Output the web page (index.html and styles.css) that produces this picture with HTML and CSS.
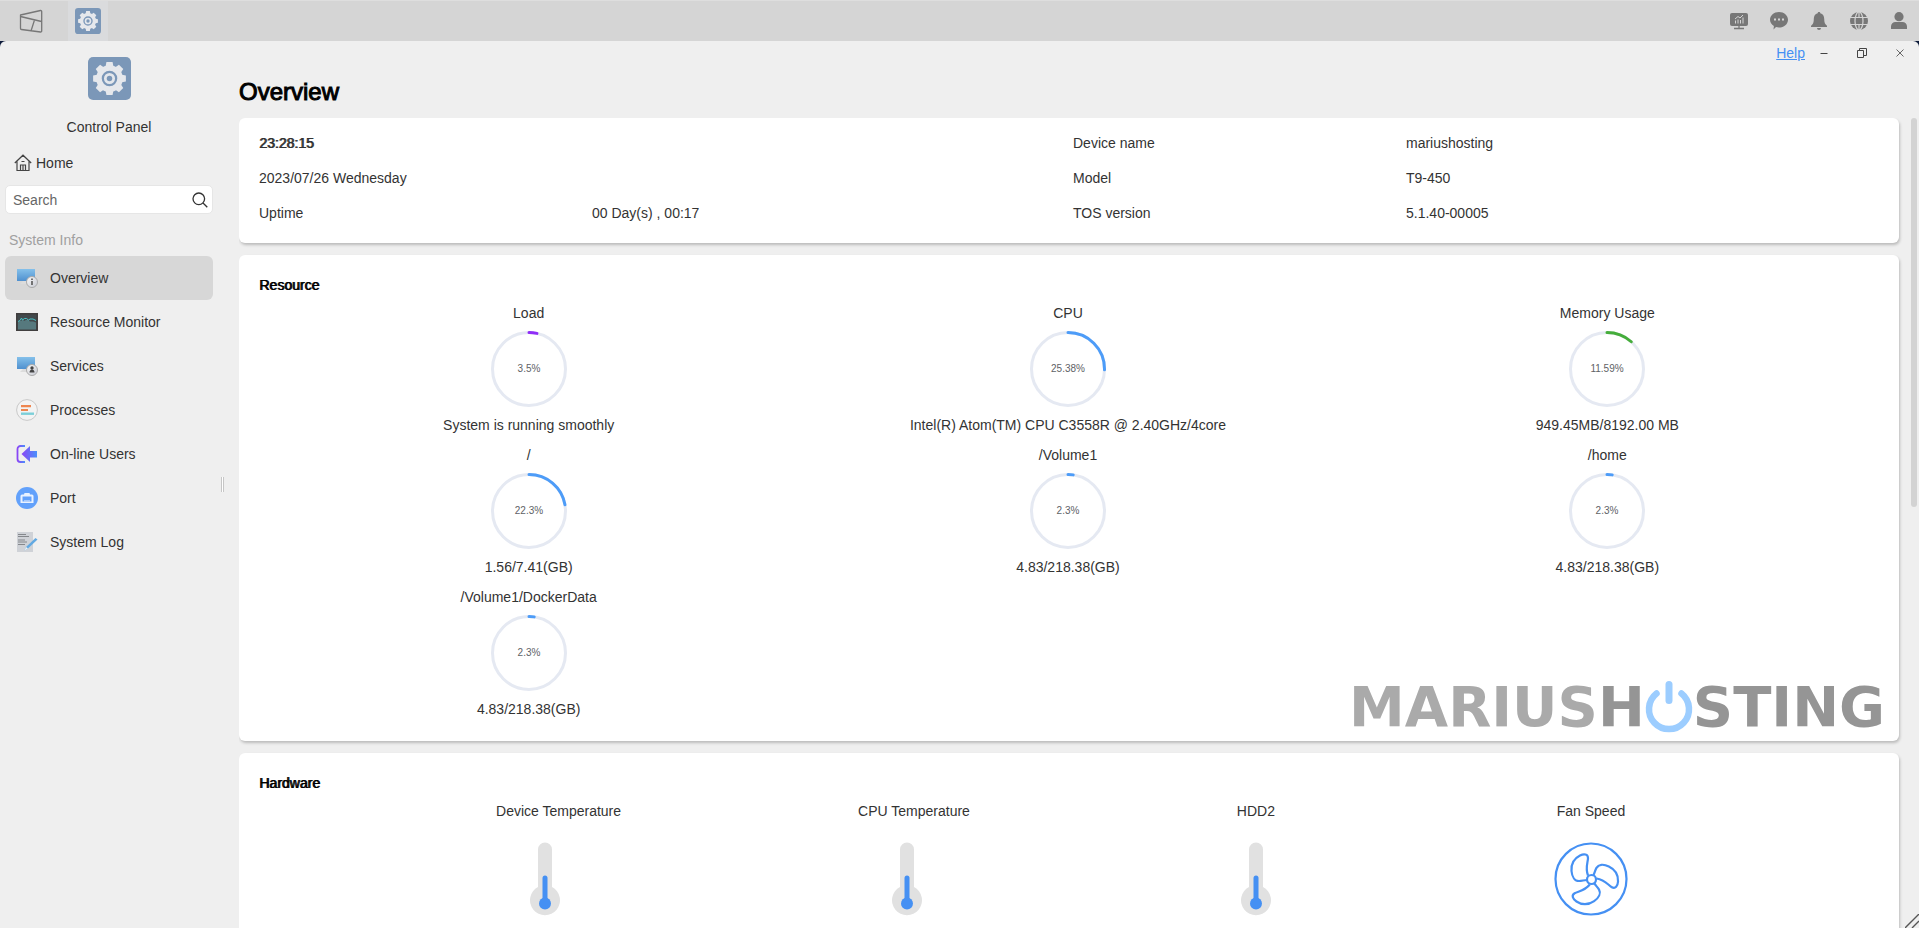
FILE: index.html
```
<!DOCTYPE html>
<html lang="en">
<head>
<meta charset="utf-8">
<title>Control Panel</title>
<link rel="stylesheet" href="styles.css">
</head>
<body>
<svg width="0" height="0" class="defs" aria-hidden="true">
  <defs>
    <linearGradient id="silver" x1="0" y1="0" x2="1" y2="1"><stop offset="0" stop-color="#fafafa"/><stop offset="1" stop-color="#c6c9d2"/></linearGradient>
    <linearGradient id="screen" x1="0" y1="0" x2="0" y2="1"><stop offset="0" stop-color="#84c0ea"/><stop offset="1" stop-color="#4f90cf"/></linearGradient>
    <linearGradient id="violet" x1="0" y1="0" x2="1" y2="0"><stop offset="0" stop-color="#8a45f5"/><stop offset="1" stop-color="#4a90fb"/></linearGradient>
    <symbol id="gear" viewBox="0 0 42 42">
      <rect width="42" height="42" rx="5" fill="#7b97b8"/>
      <g fill="#e6e8ec">
        <circle cx="21" cy="21" r="13"/>
        <path d="M17 10 18 5h6l1 5zM17 32l1 5h6l1-5z"/>
        <path d="M17 10 18 5h6l1 5zM17 32l1 5h6l1-5z" transform="rotate(45 21 21)"/>
        <path d="M17 10 18 5h6l1 5zM17 32l1 5h6l1-5z" transform="rotate(90 21 21)"/>
        <path d="M17 10 18 5h6l1 5zM17 32l1 5h6l1-5z" transform="rotate(135 21 21)"/>
      </g>
      <circle cx="21" cy="21" r="6.500" fill="#e4e7ec" stroke="#7b97b8" stroke-width="2.200"/>
      <circle cx="21" cy="21" r="2.700" fill="#7b97b8"/>
    </symbol>
    <symbol id="thermo" viewBox="0 0 98 76">
      <path d="M42 8.500a7 7 0 0 1 14 0V46a15 15 0 1 1-14 0z" fill="#e1e1e1"/>
      <path d="M49 37V62" stroke="#4590f3" stroke-width="5" stroke-linecap="round"/>
      <circle cx="49" cy="62.500" r="6" fill="#4590f3"/>
    </symbol>
  </defs>
</svg>
<div class="desktop">
  <header class="topbar">
    <button class="task" aria-label="Desktop"><svg width="24" height="24" viewBox="0 0 24 24" fill="none" stroke="#777" stroke-width="1.300" stroke-linejoin="round"><path d="M1.500 6 21.500 1.500a1 1 0 0 1 1.200 1V22a1 1 0 0 1-1.200 1L2.500 20.500a1 1 0 0 1-1-1zM1.500 7.500l21 5M15.500 11l-3.500 11"/></svg></button>
    <button class="task active" aria-label="Control Panel"><svg width="26" height="26"><use href="#gear"/></svg></button>
    <nav class="tray">
      <button aria-label="Monitor"><svg width="18" height="18" viewBox="0 0 18 18"><rect y="1" width="18" height="13" rx="2" fill="#777"/><path d="M9 14v2M4 16.500h10" stroke="#777" stroke-width="1.300"/><path d="M5.500 11.500V8.500M8 11.500V7.500M10.500 11.500V8M13 11.500V5.500M5 7l3-2.500 2 1.500 3-3" stroke="#d5d5d5" fill="none"/></svg></button>
      <button aria-label="Messages"><svg width="18" height="18" viewBox="0 0 18 18"><path d="M9 0c5 0 9 3.400 9 7.800s-4 7.800-9 7.800c-1.200 0-2.200-.2-3-.5L3.500 17.500l.4-3.500C1.500 12.600 0 10.400 0 7.800 0 3.400 4 0 9 0z" fill="#777"/><path d="M4 7.500h2M8 7.500h2M12 7.500h2" stroke="#d5d5d5" stroke-width="2"/></svg></button>
      <button aria-label="Notifications"><svg width="18" height="18" viewBox="0 0 18 18"><path d="M9 0c.8 0 1.300.5 1.300 1.300 2.700.7 3.900 2.900 3.900 5.500 0 4 .8 5.500 2.800 7v1.200H1v-1.200c2-1.500 2.800-3 2.800-7 0-2.600 1.200-4.800 3.900-5.500C7.700.5 8.200 0 9 0zM7 16h4a2 2 0 0 1-4 0z" fill="#777"/></svg></button>
      <button aria-label="Language"><svg width="18" height="18" viewBox="0 0 18 18"><circle cx="9" cy="9" r="9" fill="#777"/><g fill="none" stroke="#d5d5d5" stroke-width="1.200"><ellipse cx="9" cy="9" rx="4" ry="9"/><path d="M0 5.500h18M0 12.500h18M9 0v5.500M9 12.500V18"/></g></svg></button>
      <button aria-label="User"><svg width="18" height="18" viewBox="0 0 18 18" fill="#777"><circle cx="9" cy="4.700" r="4.600"/><path d="M1 17v-2.500a4.500 4.500 0 0 1 4.500-4.500h7a4.500 4.500 0 0 1 4.500 4.500V17z"/></svg></button>
    </nav>
  </header>
  <div class="window">
    <aside class="sidebar">
      <div class="app"><svg width="43" height="43"><use href="#gear"/></svg><span>Control Panel</span></div>
      <a class="home" href="#"><svg width="18" height="18" viewBox="0 0 18 18" fill="none" stroke="#444" stroke-width="1.200"><path d="M.8 9 9 1.200 17.200 9M3 7.500V16.500h12V7.500M6.500 16.500V11h5v5.500M9 11v5M7.500 7.500h3"/></svg>Home</a>
      <label class="search"><input type="text" placeholder="Search" aria-label="Search"><svg width="16" height="16" viewBox="0 0 16 16" fill="none" stroke="#333" stroke-width="1.300"><circle cx="6.800" cy="6.800" r="5.800"/><path d="m11 11 4.300 4.300"/></svg></label>
      <h2 class="group">System Info</h2>
      <nav class="menu">
        <a class="item current" href="#"><svg width="22" height="22" viewBox="0 0 22 22"><path d="M7 14h6l2 3H4z" fill="#dcdcdc"/><rect x="1" y="2" width="18" height="12" fill="url(#screen)"/><circle cx="16" cy="15" r="5.500" fill="url(#silver)" stroke="#aaa"/><path d="M16 14v4M16 11.500v1.500" stroke="#666" stroke-width="1.800"/></svg>Overview</a>
        <a class="item" href="#"><svg width="22" height="22" viewBox="0 0 22 22"><rect x=".8" y="2.800" width="20.400" height="16.400" fill="#41494c" stroke="#413f3f" stroke-width="1.600"/><path d="M2 10.500l4-1 1-1 1 1.500 2-1 2 0 2 1.500 3 0 3 1v7H2z" fill="#56797e"/><path d="M2 10.500l2-1 1.500-2.500 1 2 2-1.500 2 0 2 1.500 1.500-1 3 0 3 1.500" fill="none" stroke="#49c2c6"/></svg>Resource Monitor</a>
        <a class="item" href="#"><svg width="22" height="22" viewBox="0 0 22 22"><path d="M7 14h6l2 3H4z" fill="#dcdcdc"/><rect x="1" y="2" width="18" height="12" fill="url(#screen)"/><circle cx="16" cy="15" r="5.500" fill="url(#silver)" stroke="#aaa"/><circle cx="16" cy="13" r="1.700" fill="#444"/><path d="M13.500 17.500c0-4 5-4 5 0z" fill="#444"/></svg>Services</a>
        <a class="item" href="#"><svg width="22" height="22" viewBox="0 0 22 22"><circle cx="11" cy="11" r="10.400" fill="#f3f3f3" stroke="#c9c9c9"/><path d="M5 7.200h10M5 11h7" stroke="#ee8650" stroke-width="2.200"/><path d="M5 14.700h13" stroke="#7ccfd8" stroke-width="2.400"/></svg>Processes</a>
        <a class="item" href="#"><svg width="22" height="22" viewBox="0 0 22 22"><path d="M9 3H4.500a3 3 0 0 0-3 3v10a3 3 0 0 0 3 3H9" fill="none" stroke="url(#violet)" stroke-width="1.800"/><path d="M5.500 11 14 3v5h7v6.500h-7V19z" fill="url(#violet)"/></svg>On-line Users</a>
        <a class="item" href="#"><svg width="22" height="22" viewBox="0 0 22 22"><circle cx="11" cy="11" r="11" fill="#62a1fb"/><path d="M6 7.500h2L8.500 6h5l.5 1.500h2A1.500 1.500 0 0 1 17.500 9v7h-13V9A1.500 1.500 0 0 1 6 7.500z" fill="#e9f2ff"/><path d="M6.500 9.500h9v5h-9z" fill="#62a1fb"/><path d="M9 13v1.500M11 13v1.500M13 13v1.500" stroke="#e9f2ff"/></svg>Port</a>
        <a class="item" href="#"><svg width="22" height="22" viewBox="0 0 22 22"><path d="M1 1h16v20H1z" fill="#cfd2d7"/><path d="M2 3.500h8M2 5.500h11M2 9h7M2 11h9M2 13.500h7" stroke="#85888c"/><path d="M8.500 19.500 10 16 19.500 7l2 1.500L12 17.500z" fill="#62a9e2"/><path d="M8.500 19.500 10 16l2 1.500z" fill="#eef3f7"/></svg>System Log</a>
      </nav>
    </aside>
    <div class="splitter"></div>
    <main class="content">
      <div class="titlebar">
        <a href="#">Help</a>
        <button aria-label="Minimize"><svg width="10" height="10" viewBox="0 0 10 10"><path d="M1.500 5.500h7" stroke="#444"/></svg></button>
        <button aria-label="Restore"><svg width="10" height="10" viewBox="0 0 10 10" fill="none" stroke="#444"><path d="M.5 2.500h6v7h-6zM2.500 2.500v-2h7v7h-3"/></svg></button>
        <button aria-label="Close"><svg width="10" height="10" viewBox="0 0 10 10" fill="none" stroke="#666"><path d="m1.500 1.500 7 7M8.500 1.500l-7 7"/></svg></button>
      </div>
      <h1>Overview</h1>
      <div class="scroller">
        <div class="cards">
          <section class="card info">
            <strong>23:28:15</strong><span></span><span>Device name</span><span>mariushosting</span>
            <span>2023/07/26 Wednesday</span><span></span><span>Model</span><span>T9-450</span>
            <span>Uptime</span><span>00 Day(s) , 00:17</span><span>TOS version</span><span>5.1.40-00005</span>
          </section>
          <section class="card">
            <h3>Resource</h3>
            <div class="gauges">
              <figure><span>Load</span><svg class="ring" viewBox="0 0 76 76"><circle cx="38" cy="38" r="36.500"/><circle class="arc purple" cx="38" cy="38" r="36.500" pathLength="100" stroke-dasharray="3.500 100"/><text x="38" y="41">3.5%</text></svg><figcaption>System is running smoothly</figcaption></figure>
              <figure><span>CPU</span><svg class="ring" viewBox="0 0 76 76"><circle cx="38" cy="38" r="36.500"/><circle class="arc" cx="38" cy="38" r="36.500" pathLength="100" stroke-dasharray="25.380 100"/><text x="38" y="41">25.38%</text></svg><figcaption>Intel(R) Atom(TM) CPU C3558R @ 2.40GHz/4core</figcaption></figure>
              <figure><span>Memory Usage</span><svg class="ring" viewBox="0 0 76 76"><circle cx="38" cy="38" r="36.500"/><circle class="arc green" cx="38" cy="38" r="36.500" pathLength="100" stroke-dasharray="11.590 100"/><text x="38" y="41">11.59%</text></svg><figcaption>949.45MB/8192.00 MB</figcaption></figure>
              <figure><span>/</span><svg class="ring" viewBox="0 0 76 76"><circle cx="38" cy="38" r="36.500"/><circle class="arc" cx="38" cy="38" r="36.500" pathLength="100" stroke-dasharray="22.300 100"/><text x="38" y="41">22.3%</text></svg><figcaption>1.56/7.41(GB)</figcaption></figure>
              <figure><span>/Volume1</span><svg class="ring" viewBox="0 0 76 76"><circle cx="38" cy="38" r="36.500"/><circle class="arc" cx="38" cy="38" r="36.500" pathLength="100" stroke-dasharray="2.300 100"/><text x="38" y="41">2.3%</text></svg><figcaption>4.83/218.38(GB)</figcaption></figure>
              <figure><span>/home</span><svg class="ring" viewBox="0 0 76 76"><circle cx="38" cy="38" r="36.500"/><circle class="arc" cx="38" cy="38" r="36.500" pathLength="100" stroke-dasharray="2.300 100"/><text x="38" y="41">2.3%</text></svg><figcaption>4.83/218.38(GB)</figcaption></figure>
              <figure><span>/Volume1/DockerData</span><svg class="ring" viewBox="0 0 76 76"><circle cx="38" cy="38" r="36.500"/><circle class="arc" cx="38" cy="38" r="36.500" pathLength="100" stroke-dasharray="2.300 100"/><text x="38" y="41">2.3%</text></svg><figcaption>4.83/218.38(GB)</figcaption></figure>
            </div>
            <div class="brand"><span class="light">MARIUS</span><span>H</span><svg width="48" height="52" viewBox="0 0 48 52" fill="none" stroke="#9ccdff" stroke-linecap="round"><path d="M11.500 12.500A20 20 0 1 0 36.500 12.500" stroke-width="6.500"/><path d="M24 3.500v16" stroke-width="7"/></svg><span>STING</span></div>
          </section>
          <section class="card">
            <h3>Hardware</h3>
            <div class="sensors">
              <div><span>Device Temperature</span><svg width="98" height="76"><use href="#thermo"/></svg></div>
              <div><span>CPU Temperature</span><svg width="98" height="76"><use href="#thermo"/></svg></div>
              <div><span>HDD2</span><svg width="98" height="76"><use href="#thermo"/></svg></div>
              <div><span>Fan Speed</span><svg width="98" height="76" viewBox="0 0 98 76" fill="none" stroke="#4590f3" stroke-width="2.200"><circle cx="49" cy="38" r="35.500"/><circle cx="49.500" cy="38.500" r="4.500"/><path d="M46 34.500C43 27 46 21 46 17c0-4-4-4.500-8-2.500-6 3-9 9-8.500 15.500C30 36 33 40 37 40c3 0 5-1 8-1"/><path d="M46 34.500C43 27 46 21 46 17c0-4-4-4.500-8-2.500-6 3-9 9-8.500 15.500C30 36 33 40 37 40c3 0 5-1 8-1" transform="rotate(120 49.500 38.500)"/><path d="M46 34.500C43 27 46 21 46 17c0-4-4-4.500-8-2.500-6 3-9 9-8.500 15.500C30 36 33 40 37 40c3 0 5-1 8-1" transform="rotate(240 49.500 38.500)"/></svg></div>
            </div>
          </section>
        </div>
        <div class="scrollbar"><div class="thumb"></div></div>
      </div>
    </main>
    <svg class="grip" width="14" height="14" viewBox="0 0 14 14" stroke="#555" stroke-width="1.400"><path d="M0 14 14 0M7 14l7-7"/></svg>
  </div>
</div>
</body>
</html>
```
FILE: styles.css
```
* { box-sizing: border-box; }
body { margin: 0; font: 14px/20px "Liberation Sans", Arial, sans-serif; color: #333; background: #0c1a3a; }
button { border: 0; padding: 0; background: none; display: grid; place-items: center; }
h1, h2, h3, figure { margin: 0; }
.defs { position: absolute; }
.desktop { height: 100vh; display: flex; flex-direction: column; overflow: hidden; }
.topbar { height: 41px; flex: none; display: flex; align-items: stretch; background: #d5d5d5; border-top: 1px solid #dedede; padding: 0 11px; }
.task { width: 40px; margin-right: 17px; }
.task.active { background: #dadbdd; margin: 0; }
.tray { margin-left: auto; display: flex; align-items: center; gap: 22px; }
.window { position: relative; flex: 1; min-height: 0; display: flex; background: #efefef; border-radius: 6px 6px 0 0; }

.sidebar { width: 218px; flex: none; padding: 16px 5px 0; }
.app { display: flex; flex-direction: column; align-items: center; gap: 17px; }
.home { display: flex; align-items: center; gap: 4px; margin: 16px 0 12px 9px; color: #333; text-decoration: none; }
.search { display: flex; align-items: center; height: 29px; background: #fff; border: 1px solid #e6e6e6; border-radius: 5px; padding: 0 4px 0 7px; }
.search input { flex: 1; min-width: 0; border: 0; padding: 0; background: none; font: inherit; outline: 0; }
.search input::placeholder { color: #666; opacity: 1; }
.group { margin: 16px 4px 6px; font-size: 14px; font-weight: 400; color: #a0a0a0; }
.item { display: flex; align-items: center; gap: 12px; height: 44px; padding-left: 11px; border-radius: 6px; color: #333; text-decoration: none; }
.item.current { background: #d7d7d7; }
.splitter { align-self: center; width: 3px; height: 15px; margin: 0 15px 0 3px; border: solid #c6c6c6; border-width: 0 1px; background: #fff; }

.content { flex: 1; min-width: 0; display: flex; flex-direction: column; }
.titlebar { display: flex; align-items: center; justify-content: flex-end; height: 24px; padding-right: 14px; }
.titlebar a { color: #4590f3; margin-right: 14px; }
.titlebar button { width: 10px; margin-right: 28px; }
.titlebar button:last-child { margin-right: 0; }
h1 { font-size: 24px; line-height: 30px; font-weight: 400; color: #000; -webkit-text-stroke: 1px #000; padding: 12px 0 11px; }
.scroller { flex: 1; min-height: 0; display: flex; gap: 12px; overflow: hidden; }
.cards { flex: 1; min-width: 0; display: flex; flex-direction: column; gap: 12px; }
.card { position: relative; flex: none; background: #fff; border-radius: 6px; padding: 20px 22px 22px 20px; box-shadow: 1px 2px 3px rgba(0, 0, 0, .22); }
.info { display: grid; grid-template-columns: 9fr 13fr 9fr 13fr; row-gap: 15px; padding: 15px 12px 20px 20px; }
h3 { font-size: 14px; color: #000; margin-bottom: 8px; }
h3, .info strong { font-weight: 400; text-shadow: 1px 0 0 currentColor; }
.gauges { display: grid; grid-template-columns: repeat(3, 1fr); row-gap: 10px; text-align: center; }
figure { display: flex; flex-direction: column; align-items: center; gap: 8px; }
.ring { width: 76px; height: 76px; }
.ring circle { fill: none; stroke: #e5e9f2; stroke-width: 3; }
.ring .arc { stroke: #4d9cf8; stroke-linecap: round; transform: rotate(-90deg); transform-origin: center; }
.ring .purple { stroke: #8f2df7; }
.ring .green { stroke: #45ad3b; }
.ring text { font-size: 10px; text-anchor: middle; fill: #606266; }
.brand { position: absolute; right: 14px; bottom: 8px; display: flex; align-items: center; font: bold 56px/52px "DejaVu Sans", sans-serif; color: #959595; }
.brand .light { color: #aaa; }
.sensors { display: flex; justify-content: space-evenly; }
.sensors div { display: grid; gap: 20px; min-width: 98px; }
.sensors span { text-align: center; }
.scrollbar { width: 8px; }
.thumb { width: 6px; height: 48%; border-radius: 3px; background: #d3d3d3; }
.grip { position: absolute; right: 0; bottom: 0; }
```
